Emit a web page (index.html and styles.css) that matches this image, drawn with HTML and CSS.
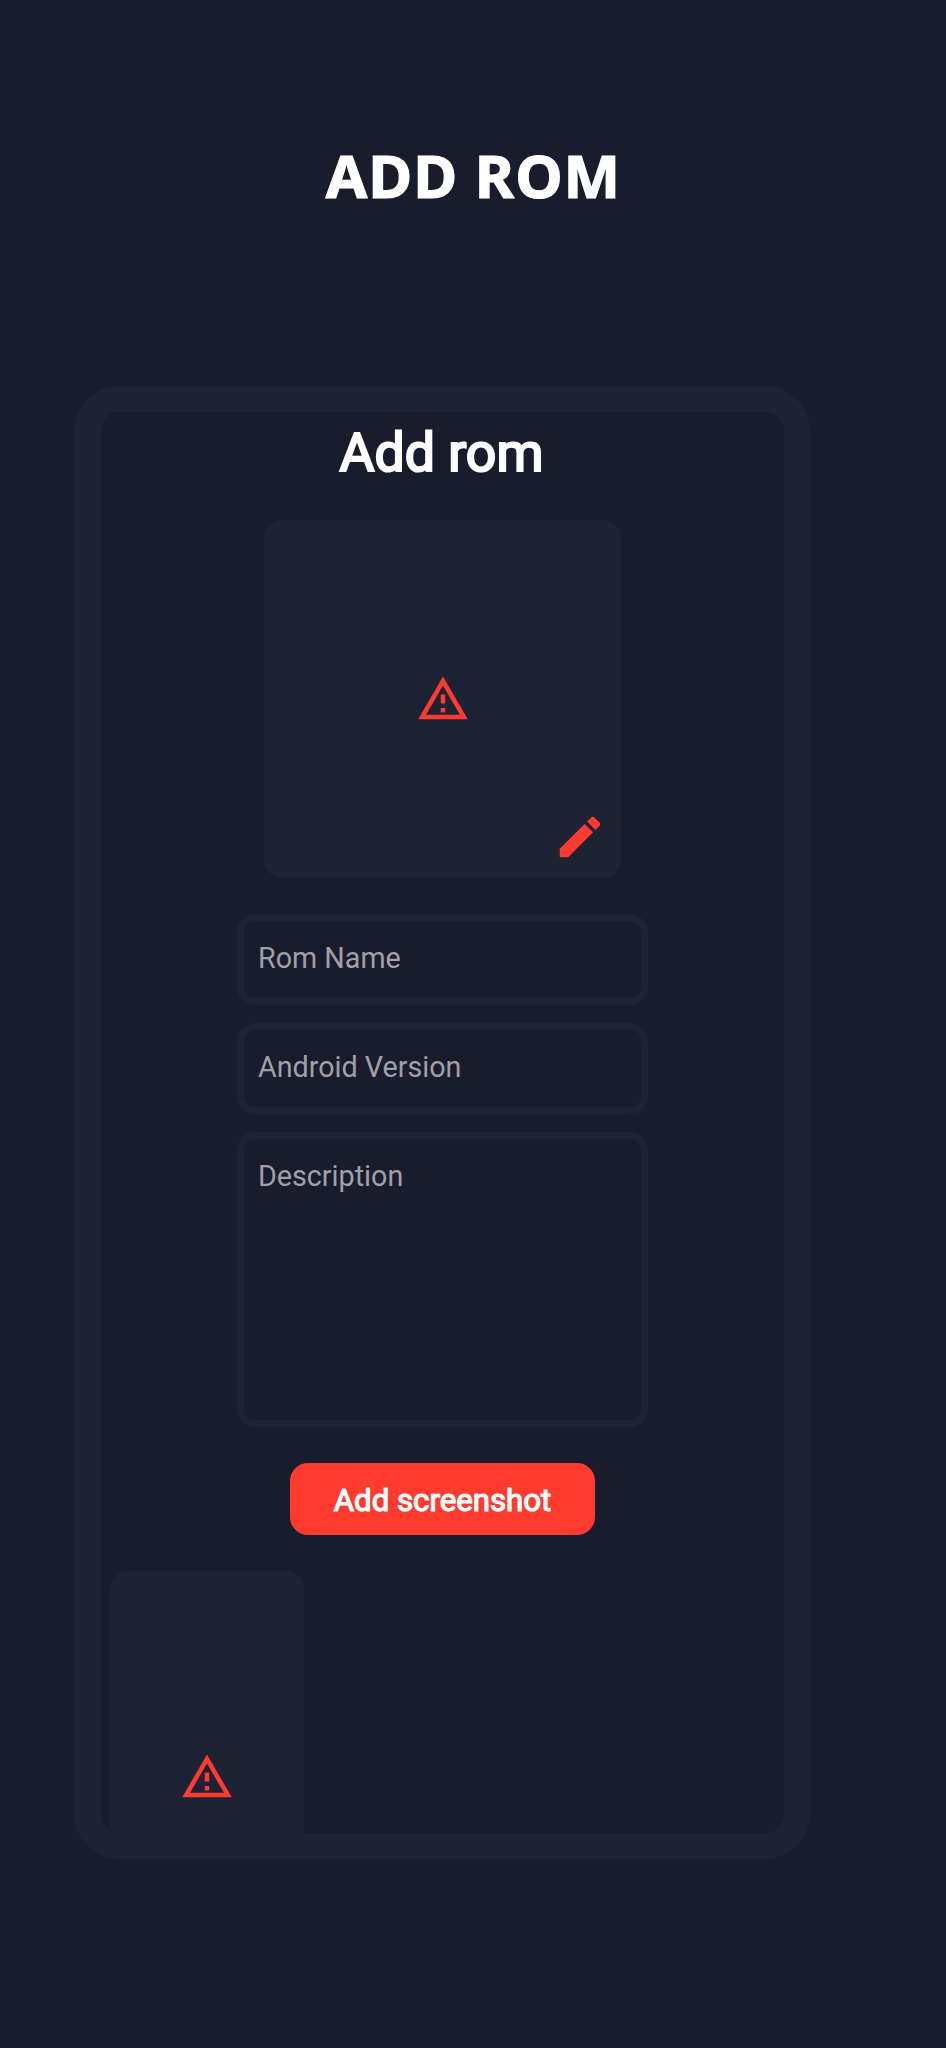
FILE: index.html
```html
<!DOCTYPE html>
<html lang="en">
<head>
<meta charset="utf-8">
<title>Add rom</title>
<link rel="stylesheet" href="styles.css">
</head>
<body>
<svg class="sprite" aria-hidden="true">
  <symbol id="warning" viewBox="0 0 24 24"><path d="M12 5.99 19.53 19H4.47L12 5.99M12 2 1 21h22L12 2zm1 14h-2v2h2v-2zm0-6h-2v4h2v-4z"/></symbol>
  <symbol id="edit" viewBox="0 0 24 24"><path d="M3 17.25V21h3.75L17.81 9.94l-3.75-3.75L3 17.25zM20.71 7.04c.39-.39.39-1.02 0-1.41l-2.34-2.34c-.39-.39-1.02-.39-1.41 0l-1.83 1.83 3.75 3.75 1.83-1.83z"/></symbol>
</svg>
<h1 class="page-title"><span>ADD ROM</span></h1>
<main class="card">
  <h2 class="card-title"><span>Add rom</span></h2>
  <div class="cover">
    <svg class="icon"><use href="#warning"/></svg>
    <svg class="icon edit"><use href="#edit"/></svg>
  </div>
  <div class="fields">
    <div class="field"><span>Rom Name</span></div>
    <div class="field"><span>Android Version</span></div>
    <div class="field description"><span>Description</span></div>
  </div>
  <div class="button"><span>Add screenshot</span></div>
  <div class="shots">
    <div class="shot"><svg class="icon"><use href="#warning"/></svg></div>
  </div>
</main>
</body>
</html>
```
FILE: styles.css
```css
* { box-sizing: border-box; }
body {
  margin: 0;
  height: 2048px;
  overflow: hidden;
  background: #191c2c;
  color: #fff;
  font-family: Roboto, sans-serif;
}
.sprite { display: none; }
.page-title {
  margin: 0;
  padding: 134px 0 0 1px;
  height: 386px;
  text-align: center;
  font: 700 60px/82px "Noto Sans", sans-serif;
  letter-spacing: 1px;
  -webkit-text-stroke: 1.2px #fff;
}
.card {
  display: flex;
  flex-direction: column;
  align-items: center;
  width: 736px;
  height: 1473px;
  margin-left: 74px;
  border: 26px solid #1d2234;
  border-left-width: 27px;
  border-radius: 45px;
  overflow: hidden;
}
.card-title {
  margin: 0;
  flex: none;
  height: 108px;
  padding: 5px 2px 0 0;
  font-size: 53.6px;
  line-height: 72px;
  font-weight: 400;
  -webkit-text-stroke: 2.2px #fff;
}
.cover {
  position: relative;
  flex: none;
  display: flex;
  align-items: center;
  justify-content: center;
  width: 357px;
  height: 358px;
  border-radius: 18px;
  background: #1d2234;
}
.icon { width: 54px; height: 54px; fill: #ff3b30; }
.edit { position: absolute; right: 14px; bottom: 14px; }
.fields {
  flex: none;
  display: flex;
  flex-direction: column;
  gap: 18px;
  width: 411px;
  margin-top: 36px;
}
.field {
  height: 91px;
  padding: 18px 14px;
  border: 7px solid #1d2234;
  border-radius: 18px;
  color: #9fa0a8;
  font-size: 28.7px;
  line-height: 38px;
}
.description { height: 295px; }
.button {
  flex: none;
  width: 305px;
  height: 72px;
  margin-top: 36px;
  border-radius: 18px;
  background: #ff3b30;
  text-align: center;
  font-size: 31.2px;
  line-height: 75px;
  -webkit-text-stroke: 1.2px #fff;
}
.shots {
  flex: none;
  align-self: stretch;
  display: flex;
  margin-top: 36px;
  padding-left: 9px;
}
.shot {
  display: flex;
  align-items: center;
  justify-content: center;
  width: 194px;
  height: 412px;
  border-radius: 18px;
  background: #1d2234;
}
```
